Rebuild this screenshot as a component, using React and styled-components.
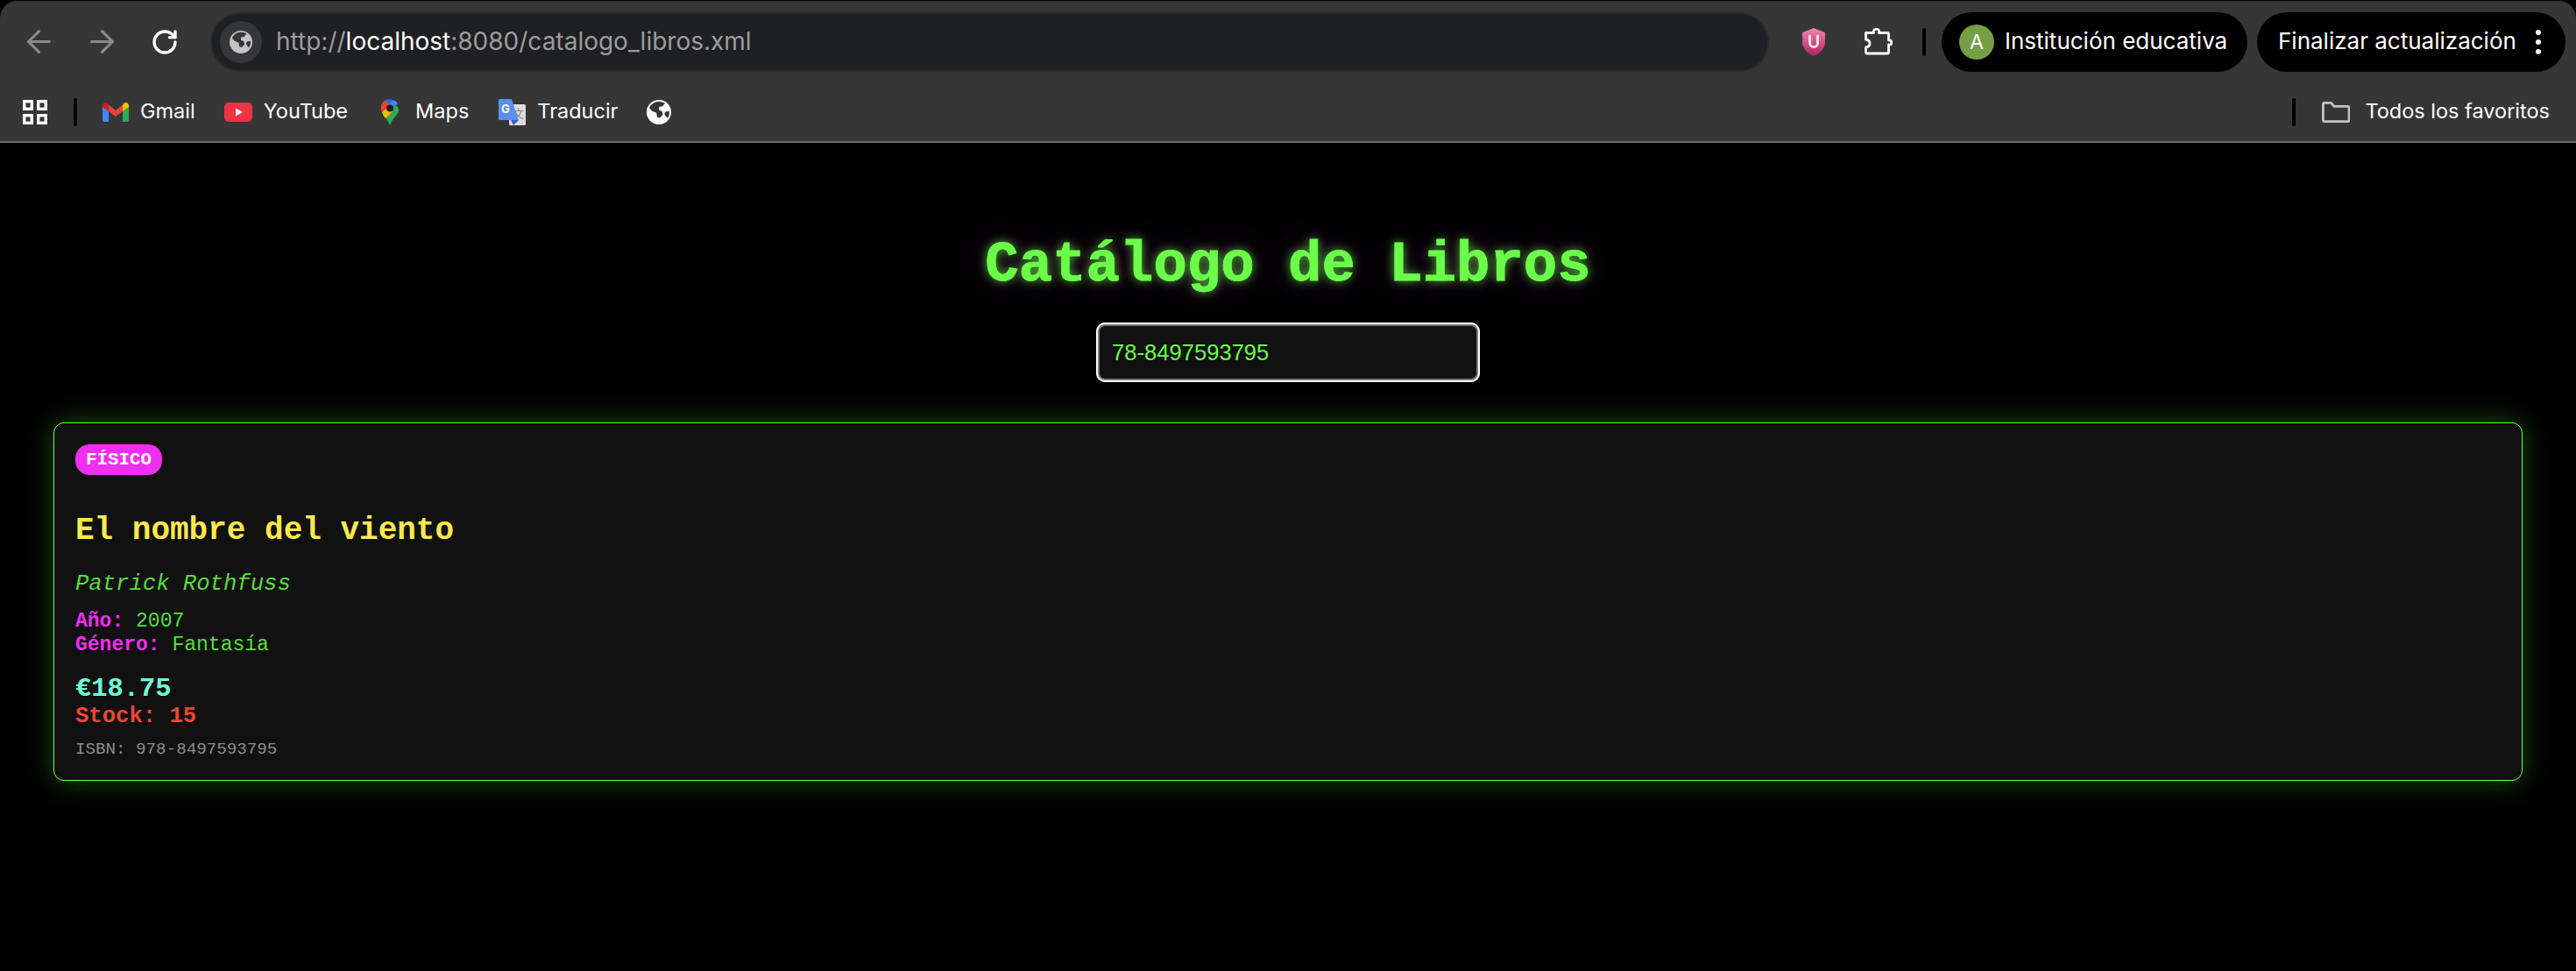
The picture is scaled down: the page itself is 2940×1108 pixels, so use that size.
import React from "react";
import styled, { createGlobalStyle } from "styled-components";
import { ArrowLeft, ArrowRight, RotateCw } from "lucide-react";

const Global = createGlobalStyle`
  html, body { margin: 0; padding: 0; background: #000; }
  * { box-sizing: border-box; }
`;

const UI = `Inter, "Noto Sans", sans-serif`;
const MONO = `"Liberation Mono", "Courier New", monospace`;
const GREEN = "#6cff4a";
const THIN_GREEN = "#58dc3c";

const Root = styled.div`
  min-height: 1108px;
  background: #000;
`;
const Chrome = styled.header`
  height: 163px;
  background: #363636;
  border-top: 1px solid #000;
  border-bottom: 2px solid #6a6a6a;
  border-radius: 20px 20px 0 0;
  font-family: ${UI};
  color: #fff;
`;
const Toolbar = styled.div`
  display: flex;
  align-items: center;
  height: 93px;
  padding: 0 12px 0 32px;
`;
const NavIcon = styled.span`
  display: flex;
  flex: none;
  width: 24px;
  height: 24px;
  margin-right: ${(p) => p.$gap}px;
  color: ${(p) => (p.$dim ? "#8a8a8a" : "#fff")};
  align-items: center;
  justify-content: center;
  svg {
    flex: none;
  }
`;
const Omnibox = styled.div`
  flex: 1;
  height: 68px;
  display: flex;
  align-items: center;
  gap: 16px;
  padding-left: 9px;
  background: #1f2023;
  border: 2px solid #2a2b2d;
  border-radius: 34px;
  margin-right: 38px;
`;
const SiteBadge = styled.span`
  width: 48px;
  height: 48px;
  border-radius: 50%;
  background: #36373a;
  display: flex;
  align-items: center;
  justify-content: center;
`;
const Url = styled.span`
  font-size: 28px;
  margin-top: -1px;
  color: #9c9c9c;
  b {
    font-weight: 400;
    color: #fff;
  }
`;
const ActionIcon = styled.span`
  display: flex;
  margin-right: ${(p) => p.$gap}px;
`;
const VSep = styled.span`
  width: 4px;
  height: 32px;
  border-radius: 2px;
  background: #000;
  flex: none;
  margin: ${(p) => p.$margin};
`;
const Pill = styled.div`
  height: 68px;
  width: ${(p) => p.$w}px;
  margin-left: ${(p) => p.$ml || 0}px;
  display: flex;
  align-items: center;
  background: #000;
  border-radius: 34px;
  padding-left: ${(p) => p.$pl}px;
  font-size: 26px;
  white-space: nowrap;
`;
const Avatar = styled.span`
  width: 40px;
  height: 40px;
  border-radius: 50%;
  background: #759e47;
  display: flex;
  align-items: center;
  justify-content: center;
  font-size: 23px;
  margin-right: 12px;
`;
const Dots = styled.span`
  display: flex;
  flex-direction: column;
  gap: 5px;
  margin-left: 22px;
  i {
    width: 6px;
    height: 6px;
    border-radius: 50%;
    background: #fff;
    display: block;
  }
`;
const BookmarkBar = styled.nav`
  display: flex;
  align-items: center;
  height: 67px;
  padding: 0 30px 0 26px;
  font-size: 23.5px;
`;
const Bookmark = styled.span`
  display: flex;
  align-items: center;
  gap: ${(p) => p.$gap || 13}px;
  margin-right: ${(p) => p.$mr || 0}px;
  white-space: nowrap;
`;
const Label = styled.span`
  margin-top: -2px;
`;
const Spacer = styled.span`
  flex: 1;
`;
const Page = styled.main`
  padding: 104px 61px 0;
  font-family: ${MONO};
`;
const Title = styled.h1`
  margin: 0;
  font-size: 64px;
  line-height: 72px;
  font-weight: 700;
  text-align: center;
  color: ${GREEN};
  -webkit-text-stroke: 0.8px ${GREEN};
  text-shadow: 0 0 12px rgba(108, 255, 74, 0.8), 0 0 40px rgba(240, 50, 240, 0.3);
`;
const SearchRow = styled.div`
  display: flex;
  justify-content: center;
  margin-top: 29px;
`;
const Search = styled.input`
  width: 438px;
  height: 68px;
  padding: 0 14px;
  background: #111;
  border: 4px solid #777;
  outline: 2px solid #fff;
  outline-offset: -2px;
  border-radius: 10px;
  color: ${GREEN};
  font-family: "Liberation Sans", Arial, sans-serif;
  font-size: 25.6px;
`;
const Card = styled.article`
  margin-top: 46px;
  height: 409px;
  background: #111;
  border: 1px solid ${GREEN};
  border-radius: 12px;
  padding: 24px;
  box-shadow: 0 0 30px rgba(108, 255, 74, 0.3);
`;
const Badge = styled.span`
  display: block;
  width: 99px;
  height: 35px;
  line-height: 35px;
  text-align: center;
  border-radius: 16px;
  background: #ee2ff0;
  color: #fff;
  font-size: 20.8px;
  font-weight: 700;
`;
const BookTitle = styled.h2`
  margin: 44px 0 0;
  font-size: 36px;
  line-height: 40px;
  font-weight: 700;
  color: #ffe94d;
`;
const Author = styled.p`
  margin: 26px 0 0;
  font-size: 25.6px;
  line-height: 30px;
  font-style: italic;
  color: ${THIN_GREEN};
`;
const Meta = styled.p`
  margin: ${(p) => (p.$first ? "14px" : "0")} 0 0;
  font-size: 23px;
  line-height: 27px;
  color: ${THIN_GREEN};
  b {
    color: #ee2ff0;
  }
`;
const Price = styled.p`
  margin: 18px 0 0;
  font-size: 30.4px;
  line-height: 36px;
  font-weight: 700;
  color: #6fffd6;
`;
const Stock = styled.p`
  margin: 0;
  font-size: 25.6px;
  line-height: 28px;
  font-weight: 700;
  color: #f04438;
`;
const Isbn = styled.p`
  margin: 12px 0 0;
  font-size: 19.2px;
  line-height: 22px;
  color: #8c8c8c;
`;

const GlobeIcon = ({ size, fill, cut }) => (
  <svg width={size} height={size} viewBox="0 0 28 28">
    <circle cx="14" cy="14" r="14" fill={fill} />
    <path fill={cut} d="M11 2.200c3.500-.7 7-.2 10 1.500l-3 3.800-3.500.3-.8 3.500 3.800 1.800 1 3.700-3.500 3.700-3-.8-.8-5-5-2L3 9c1.500-3.300 4.500-6 8-6.800z" />
    <path fill={cut} d="M25.800 13l-4 .2-1.600 2.600 1.800 3.300 2 1.400c1.500-2 2.200-4.500 1.800-7.500z" />
  </svg>
);

const GridIcon = () => (
  <svg width="28" height="28" viewBox="0 0 28 28" fill="none" stroke="#fff" strokeWidth="3.4">
    <rect x="1.700" y="1.700" width="8.600" height="8.600" />
    <rect x="17.700" y="1.700" width="8.600" height="8.600" />
    <rect x="1.700" y="17.700" width="8.600" height="8.600" />
    <rect x="17.700" y="17.700" width="8.600" height="8.600" />
  </svg>
);

const GmailIcon = () => (
  <svg width="30" height="22" viewBox="0 0 30 22">
    <path fill="#4285f4" d="M0 3v17a2 2 0 0 0 2 2h5V9z" />
    <path fill="#34a853" d="M23 9v13h5a2 2 0 0 0 2-2V3z" />
    <path fill="#ea4335" d="M7 2.500 15 9l8-6.500V10l-8 6-8-6z" />
    <path fill="#c5221f" d="M0 3.500C0 .5 3.500-1 5.500.8L7 2.500V10L0 5z" />
    <path fill="#fbbc04" d="M30 3.500C30 .5 26.500-1 24.500.8L23 2.500V10l7-5z" />
  </svg>
);

const YouTubeIcon = () => (
  <svg width="32" height="22" viewBox="0 0 32 22">
    <rect width="32" height="22" rx="5" fill="#ee3344" />
    <path fill="#fff" d="M13 6.500v9l8-4.500z" />
  </svg>
);

const MapsIcon = () => (
  <svg width="22" height="30" viewBox="0 0 22 30">
    <path fill="#34a853" d="M11 30C9 24 4 20 2 15l6-1 8-8 4 3c1.500 2.500 1.500 5 0 7-3 5-7 8-9 14z" />
    <path fill="#fbbc04" d="M2 15l6-7 6 6-8 8c-2-2-3-4.500-4-7z" />
    <path fill="#4285f4" d="M20 5l-6 6-5-5 5-5c2.500.5 4.500 2 6 4z" />
    <path fill="#ea4335" d="M2 15C-1 9 1.500 3.500 6 1.200l6 5.800L2 15z" />
    <path fill="#1a73e8" d="M6 1.200C8.500-.3 11.500-.3 14 .7L9 6z" />
    <circle cx="11" cy="10.500" r="4" fill="#1f1f1f" />
  </svg>
);

const TranslateIcon = () => (
  <svg width="31" height="30" viewBox="0 0 31 30">
    <rect x="12" y="6" width="19" height="24" rx="1.500" fill="#dcdcdc" />
    <text x="22.500" y="21" fontSize="13" fontFamily={`"Noto Sans CJK SC", sans-serif`} textAnchor="middle" fill="#8a8a8a">文</text>
    <path fill="#3d5ccc" d="M14 24h9l-6 6z" />
    <path fill="#5a8eee" d="M1.500 0H15l8 24H1.500A1.500 1.500 0 0 1 0 22.500v-21A1.500 1.500 0 0 1 1.500 0z" />
    <text x="8" y="16" fontSize="13" fontWeight="700" fontFamily="Inter, sans-serif" textAnchor="middle" fill="#fff">G</text>
  </svg>
);

const ShieldIcon = () => (
  <svg width="26" height="32" viewBox="0 0 26 32">
    <defs>
      <linearGradient id="shield" x1="0" y1="0" x2="0" y2="1">
        <stop offset="0" stopColor="#ee85ab" />
        <stop offset="1" stopColor="#b8205f" />
      </linearGradient>
    </defs>
    <path fill="url(#shield)" d="M13 0l13 5v11c0 7-6 13-13 16C6 29 0 23 0 16V5z" />
    <path fill="none" stroke="#f2e6ea" strokeWidth="2.800" strokeLinecap="round" d="M8.500 9v8a4.500 4.500 0 0 0 9 0V9" />
  </svg>
);

const PuzzleIcon = () => (
  <svg width="32" height="32" viewBox="0 0 32 32" fill="none" stroke="#fff" strokeWidth="2.800" strokeLinejoin="round">
    <path d="M1.500 5.500H10.500C10 2.500 11.500 1.200 13.500 1.200s3.500 1.300 3 4.300H26a1.500 1.500 0 0 1 1.500 1.500v7c2.500-.5 3.300 1 3.300 2.500s-.8 3-3.300 2.500v8.500a1.500 1.500 0 0 1-1.500 1.500H3a1.500 1.500 0 0 1-1.500-1.500V22c3-.5 4.500-2.500 4.500-4.500S4.500 13.500 1.500 13z" />
  </svg>
);

const FolderIcon = () => (
  <svg width="32" height="24" viewBox="0 0 32 24" fill="none" stroke="#c4c4c4" strokeWidth="2.800" strokeLinejoin="round">
    <path d="M1.400 2.800a1.400 1.400 0 0 1 1.400-1.400h7.700l3.500 4h15.600a1.400 1.400 0 0 1 1.400 1.400v14.400a1.400 1.400 0 0 1-1.400 1.400H2.800a1.400 1.400 0 0 1-1.400-1.400z" />
  </svg>
);

export default function App() {
  return (
    <Root>
      <Global />
      <Chrome>
        <Toolbar>
          <NavIcon $dim $gap={48}><ArrowLeft size={41} strokeWidth={1.8} /></NavIcon>
          <NavIcon $dim $gap={48}><ArrowRight size={41} strokeWidth={1.8} /></NavIcon>
          <NavIcon $gap={40}><RotateCw size={32} strokeWidth={2.5} /></NavIcon>
          <Omnibox>
            <SiteBadge><GlobeIcon size={26} fill="#c4c4c4" cut="#36373a" /></SiteBadge>
            <Url>http://<b>localhost</b>:8080/catalogo_libros.xml</Url>
          </Omnibox>
          <ActionIcon $gap={45}><ShieldIcon /></ActionIcon>
          <ActionIcon $gap={34}><PuzzleIcon /></ActionIcon>
          <VSep $margin="0 18px 0 0" />
          <Pill $w={349} $pl={20}>
            <Avatar>A</Avatar>
            <Label>Institución educativa</Label>
          </Pill>
          <Pill $w={352} $ml={11} $pl={24}>
            <Label>Finalizar actualización</Label>
            <Dots><i /><i /><i /></Dots>
          </Pill>
        </Toolbar>
        <BookmarkBar>
          <GridIcon />
          <VSep $margin="0 29px 0 30px" />
          <Bookmark $mr={33}><GmailIcon /><Label>Gmail</Label></Bookmark>
          <Bookmark $mr={37}><YouTubeIcon /><Label>YouTube</Label></Bookmark>
          <Bookmark $gap={18} $mr={34}><MapsIcon /><Label>Maps</Label></Bookmark>
          <Bookmark $mr={33}><TranslateIcon /><Label>Traducir</Label></Bookmark>
          <GlobeIcon size={28} fill="#fff" cut="#363636" />
          <Spacer />
          <VSep $margin="0 30px 0 0" />
          <Bookmark $gap={17}><FolderIcon /><Label>Todos los favoritos</Label></Bookmark>
        </BookmarkBar>
      </Chrome>
      <Page>
        <Title>Catálogo de Libros</Title>
        <SearchRow>
          <Search readOnly value="78-8497593795" />
        </SearchRow>
        <Card>
          <Badge>FÍSICO</Badge>
          <BookTitle>El nombre del viento</BookTitle>
          <Author>Patrick Rothfuss</Author>
          <Meta $first><b>Año:</b> 2007</Meta>
          <Meta><b>Género:</b> Fantasía</Meta>
          <Price>€18.75</Price>
          <Stock>Stock: 15</Stock>
          <Isbn>ISBN: 978-8497593795</Isbn>
        </Card>
      </Page>
    </Root>
  );
}
